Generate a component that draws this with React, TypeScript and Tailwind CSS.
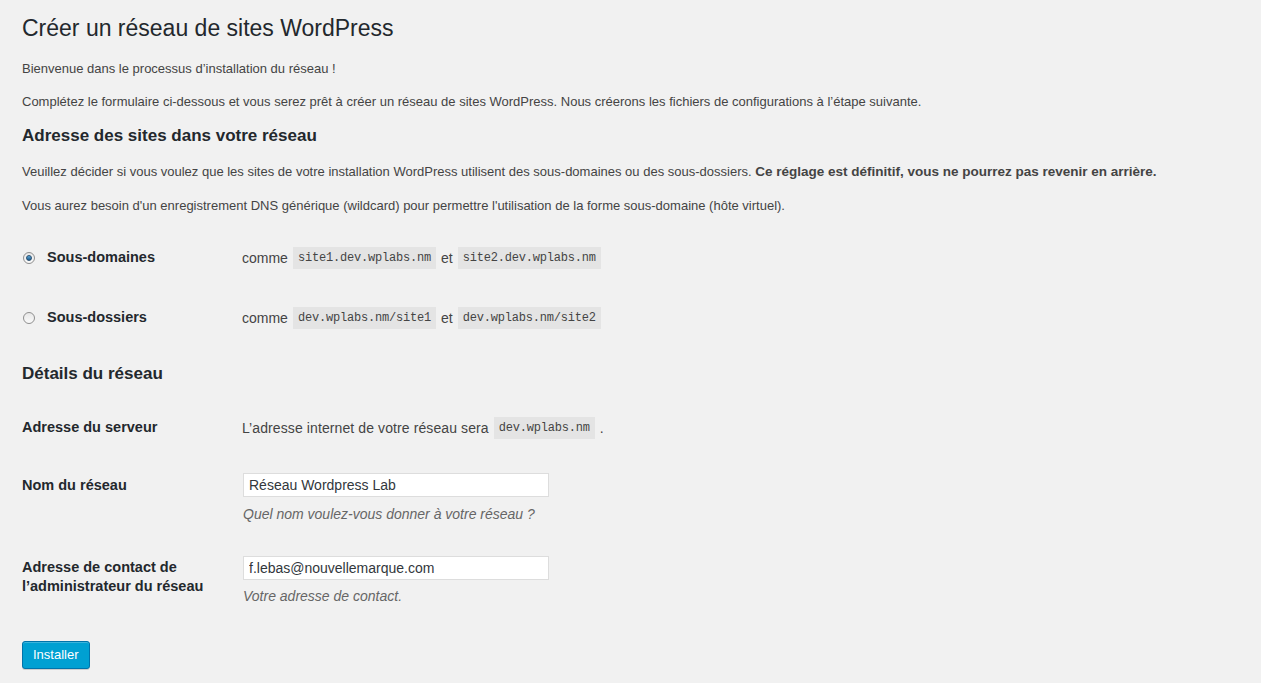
const Code = ({ children }: { children: React.ReactNode }) => (
  <code className="bg-[#e4e4e4] px-[5px] py-[3px] text-[12px] leading-[16px] text-[#444] font-['Liberation_Mono','DejaVu_Sans_Mono',monospace] tracking-[-0.2px]">
    {children}
  </code>
);

const Radio = ({ checked }: { checked?: boolean }) => (
  <span className="w-[12px] h-[12px] rounded-full border border-[#8f8f8f] bg-gradient-to-b from-[#e8e8e8] to-[#fafafa] flex items-center justify-center shrink-0">
    {checked && (
      <span className="w-[6px] h-[6px] rounded-full bg-gradient-to-b from-[#5ea9d8] to-[#1a5c8f] border border-[#2a4e6e]" />
    )}
  </span>
);

const App = () => {
  return (
    <div className="min-h-[683px] bg-[#f1f1f1] text-[#444] text-[13px] font-['Liberation_Sans',Arial,sans-serif] px-[22px] pt-[14px]">
      <h1 className="text-[23px] leading-[29px] text-[#23282d] font-normal">
        Créer un réseau de sites WordPress
      </h1>
      <p className="mt-[16px] leading-[20px]">Bienvenue dans le processus d’installation du réseau !</p>
      <p className="mt-[13px] leading-[20px]">
        Complétez le formulaire ci-dessous et vous serez prêt à créer un réseau de sites WordPress. Nous créerons les
        fichiers de configurations à l’étape suivante.
      </p>

      <h3 className="mt-[13px] text-[17px] leading-[22px] font-bold text-[#23282d]">
        Adresse des sites dans votre réseau
      </h3>
      <p className="mt-[15px] leading-[20px]">
        Veuillez décider si vous voulez que les sites de votre installation WordPress utilisent des sous-domaines ou
        des sous-dossiers.{" "}
        <strong className="font-bold text-[13.5px]">Ce réglage est définitif, vous ne pourrez pas revenir en arrière.</strong>
      </p>
      <p className="mt-[14px] leading-[20px]">
        Vous aurez besoin d'un enregistrement DNS générique (wildcard) pour permettre l'utilisation de la forme
        sous-domaine (hôte virtuel).
      </p>

      {/* Choix sous-domaines / sous-dossiers */}
      <div className="mt-[22px] h-[40px] flex items-center">
        <label className="w-[220px] flex items-center gap-[12px] pl-[1px] font-bold text-[14.5px] text-[#23282d]">
          <Radio checked />
          Sous-domaines
        </label>
        <div className="text-[14px] flex items-center gap-[5px]">
          <span>comme</span>
          <Code>site1.dev.wplabs.nm</Code>
          <span>et</span>
          <Code>site2.dev.wplabs.nm</Code>
        </div>
      </div>
      <div className="mt-[20px] h-[40px] flex items-center">
        <label className="w-[220px] flex items-center gap-[12px] pl-[1px] font-bold text-[14.5px] text-[#23282d]">
          <Radio />
          Sous-dossiers
        </label>
        <div className="text-[14px] flex items-center gap-[5px]">
          <span>comme</span>
          <Code>dev.wplabs.nm/site1</Code>
          <span>et</span>
          <Code>dev.wplabs.nm/site2</Code>
        </div>
      </div>

      <h3 className="mt-[25px] text-[17px] leading-[22px] font-bold text-[#23282d]">Détails du réseau</h3>

      <div className="mt-[23px] h-[40px] flex items-center">
        <div className="w-[220px] font-bold text-[14.5px] text-[#23282d]">Adresse du serveur</div>
        <div className="text-[14px] flex items-center gap-[5px]">
          <span className="tracking-[0.1px]">L’adresse internet de votre réseau sera</span>
          <Code>dev.wplabs.nm</Code>
          <span>.</span>
        </div>
      </div>

      <div className="mt-[25px] flex items-start">
        <div className="w-[221px] font-bold text-[14.5px] leading-[25px] text-[#23282d]">Nom du réseau</div>
        <div>
          <input
            defaultValue="Réseau Wordpress Lab"
            className="w-[306px] h-[24px] bg-white border border-[#ddd] px-[5px] text-[14px] text-[#32373c] outline-none font-['Liberation_Sans',Arial,sans-serif]"
          />
          <p className="mt-[7px] leading-[20px] text-[14px] italic text-[#666]">Quel nom voulez-vous donner à votre réseau ?</p>
        </div>
      </div>

      <div className="mt-[32px] flex items-start">
        <div className="w-[221px] mt-[2px] font-bold text-[14.5px] leading-[19px] text-[#23282d]">
          Adresse de contact de
          <br />
          l’administrateur du réseau
        </div>
        <div>
          <input
            defaultValue="f.lebas@nouvellemarque.com"
            className="w-[306px] h-[24px] bg-white border border-[#ddd] px-[5px] text-[14px] text-[#32373c] outline-none font-['Liberation_Sans',Arial,sans-serif]"
          />
          <p className="mt-[6px] leading-[20px] text-[14px] italic text-[#666]">Votre adresse de contact.</p>
        </div>
      </div>

      <button className="mt-[35px] h-[28px] px-[10px] rounded-[3px] bg-[#00a0d2] border border-[#0073aa] text-white text-[13px] shadow-[inset_0_1px_0_rgba(120,200,230,0.5),0_1px_0_rgba(0,0,0,0.15)]">
        Installer
      </button>
    </div>
  );
};

export default App;
